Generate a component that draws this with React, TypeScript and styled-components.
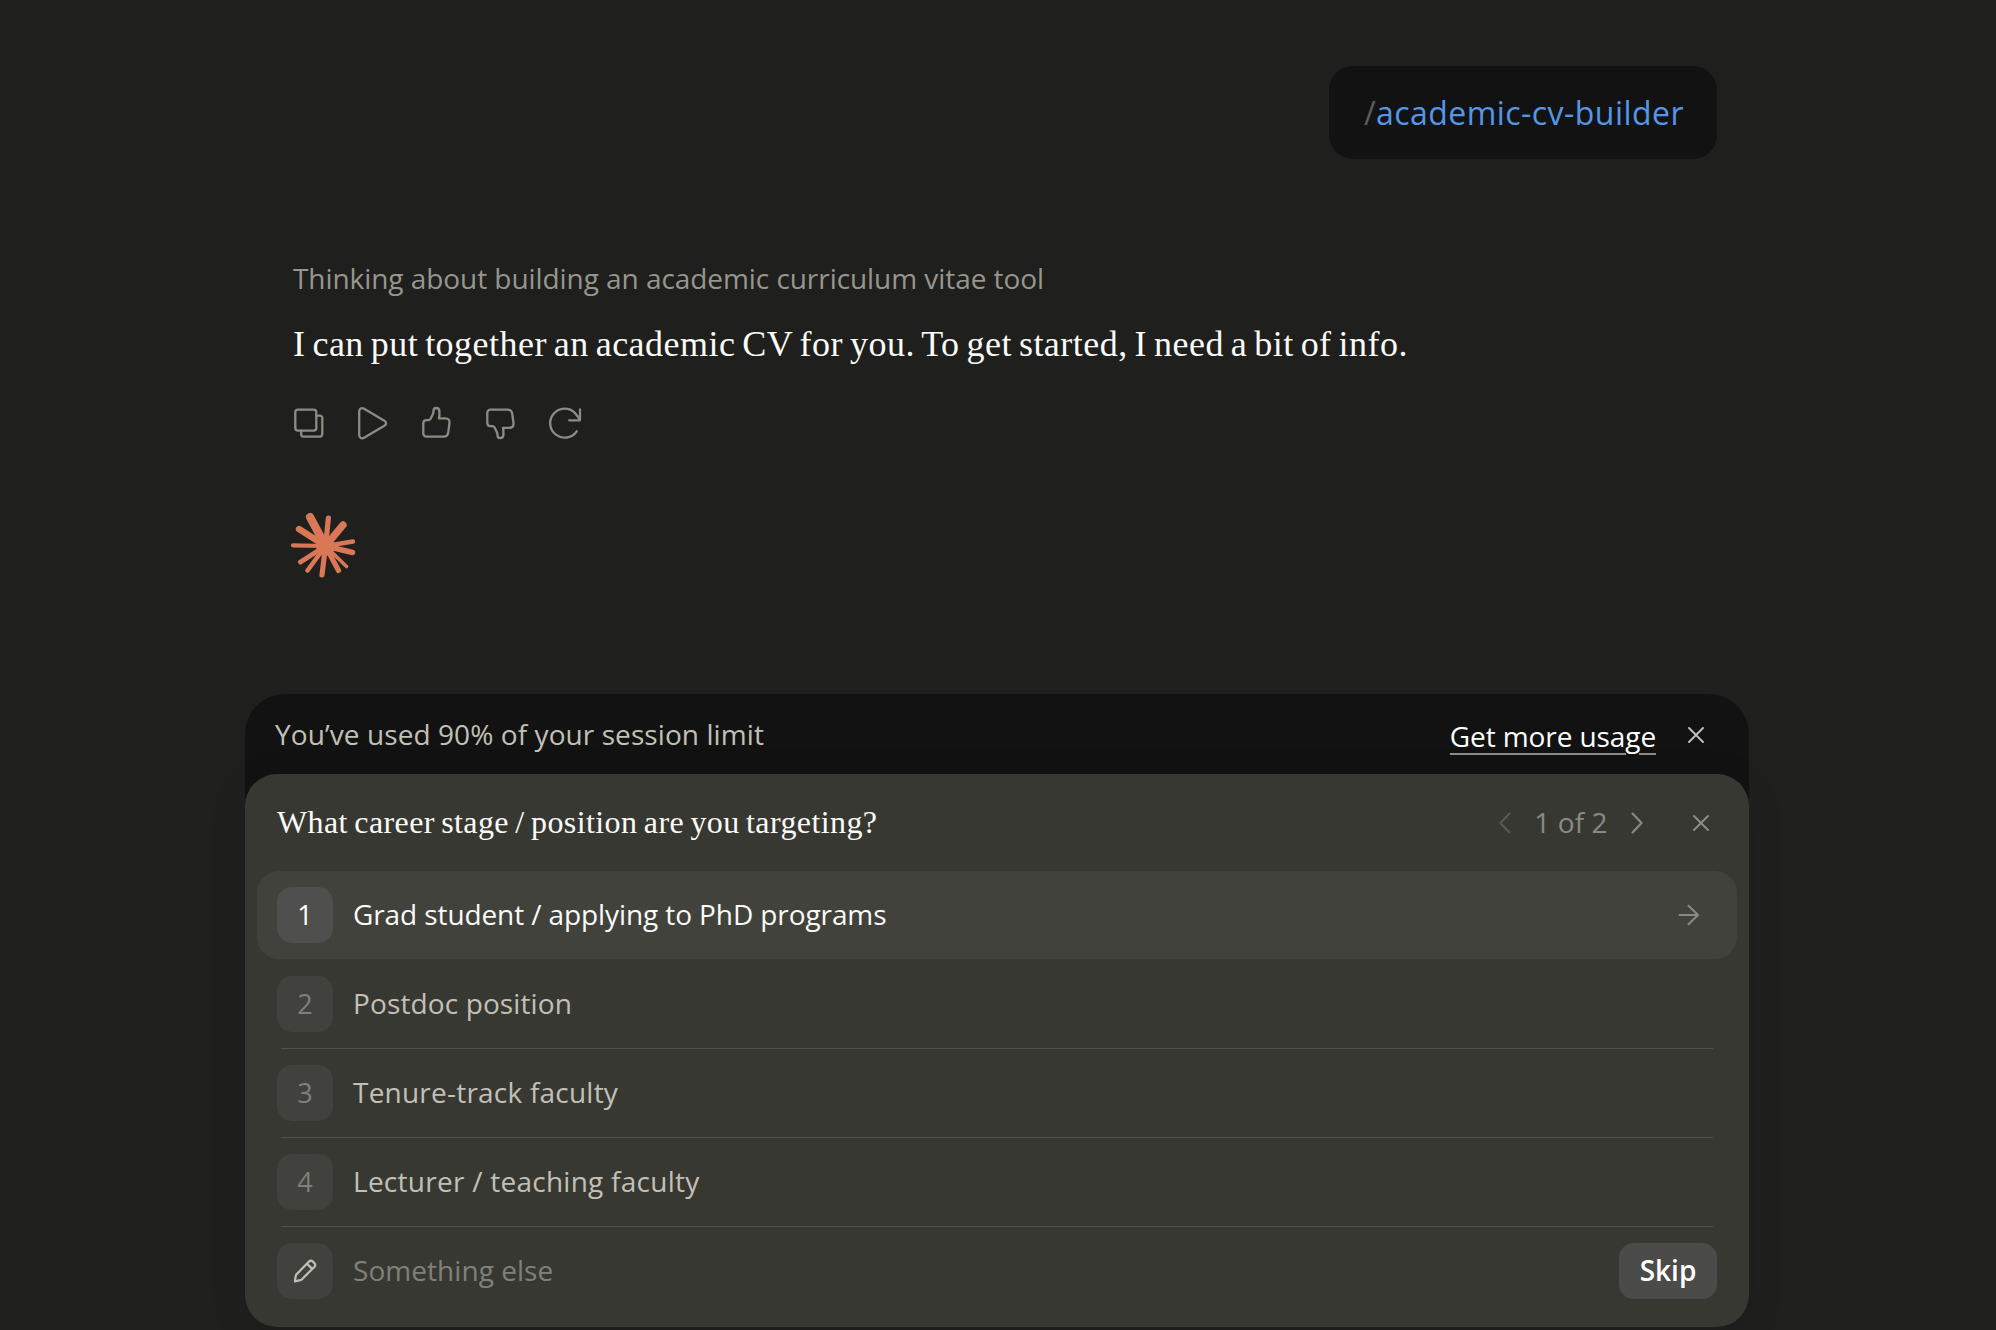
import React from "react";
import styled, { createGlobalStyle } from "styled-components";

const sans = `"Open Sans", "Noto Sans", sans-serif`;
const serif = `"Liberation Serif", serif`;

const Global = createGlobalStyle`
  *, *::before, *::after { box-sizing: border-box; }
  body { margin: 0; background: #1f1f1d; }
  button { font: inherit; color: inherit; background: none; border: 0; padding: 0; }
`;

const Page = styled.main`
  width: 1996px;
  height: 1330px;
  padding: 66px 247px 0 245px;
  display: flex;
  flex-direction: column;
  overflow: hidden;
  background: #1f1f1d;
  font-family: ${sans};
  color: #fff;
`;

const Conversation = styled.section`
  height: 628px;
  padding: 0 32px 0 48px;
  display: flex;
  flex-direction: column;
`;

const UserBubble = styled.div`
  align-self: flex-end;
  width: 388px;
  height: 93px;
  padding-left: 35px;
  border-radius: 24px;
  background: #121212;
  display: flex;
  align-items: center;
  line-height: 44px;
`;

const Text = styled.span<{ $size: number; $color: string; $spacing?: number; $word?: number; $serif?: boolean; $weight?: number }>`
  font-family: ${(p) => (p.$serif ? serif : sans)};
  font-size: ${(p) => p.$size}px;
  font-weight: ${(p) => p.$weight ?? 430};
  letter-spacing: ${(p) => p.$spacing ?? 0}px;
  word-spacing: ${(p) => p.$word ?? 0}px;
  color: ${(p) => p.$color};
  white-space: nowrap;
`;

const RowLabel = styled(Text)`
  padding-bottom: 2px;
`;

const Slash = styled(Text)`
  width: 12px;
`;

const Thinking = styled.div`
  margin-top: 98px;
  height: 43px;
  line-height: 42px;
`;

const Answer = styled.p`
  margin: 20px 0 0;
  height: 48px;
  line-height: 48px;
`;

const Actions = styled.div`
  margin-top: 35px;
  height: 40px;
  display: flex;
  gap: 24px;
  margin-left: -4px;
`;

const IconButton = styled.button<{ $color: string; $w?: number }>`
  width: ${(p) => p.$w ?? 40}px;
  height: 40px;
  display: flex;
  align-items: center;
  justify-content: center;
  color: ${(p) => p.$color};
`;

const Mark = styled.div`
  margin: 69px 0 0 -3px;
  height: 68px;
`;

const Dock = styled.section`
  width: 1504px;
  flex: none;
  background: #121212;
  border-radius: 40px 40px 32px 32px;
`;

const Banner = styled.div`
  height: 80px;
  padding: 2px 33px 0 30px;
  display: flex;
  align-items: center;
`;

const Spacer = styled.div`
  flex: 1;
`;

const UsageLink = styled.a`
  margin: 1px 20px 0 0;
  font-size: 28px;
  font-weight: 430;
  color: #fff;
  text-decoration: underline;
  text-decoration-color: #8b8b87;
  text-decoration-thickness: 2px;
  text-underline-offset: 6px;
  letter-spacing: -0.1px;
`;

const Card = styled.div`
  height: 553px;
  padding: 0 12px;
  border-radius: 32px;
  background: #383833;
  box-shadow: 0 8px 40px rgba(0, 0, 0, 0.09);
`;

const CardHeader = styled.header`
  height: 97px;
  padding: 0 16px 0 20px;
  display: flex;
  align-items: center;
`;

const Pager = styled.div`
  display: flex;
  align-items: center;
  margin-right: 32px;
`;

const PageCount = styled(RowLabel)`
  width: 76px;
  margin: 0 16px;
  text-align: center;
`;

const Options = styled.ul`
  margin: 0;
  padding: 0;
  list-style: none;
`;

const Option = styled.li<{ $active?: boolean }>`
  height: 88px;
  padding: 0 20px;
  border-radius: 22px;
  display: flex;
  align-items: center;
  background: ${(p) => (p.$active ? "#42423d" : "transparent")};
`;

const Divider = styled.li<{ $hidden?: boolean }>`
  height: 1px;
  margin: 0 24px;
  background: ${(p) => (p.$hidden ? "transparent" : "#50504c")};
`;

const Badge = styled.span<{ $active?: boolean }>`
  width: 56px;
  height: 56px;
  margin-right: 20px;
  flex: none;
  border-radius: 15px;
  display: flex;
  align-items: center;
  justify-content: center;
  background: ${(p) => (p.$active ? "#4f4f4d" : "#41413d")};
`;

const Skip = styled.button`
  width: 98px;
  height: 56px;
  border-radius: 15px;
  background: #4b4b49;
  display: flex;
  align-items: center;
  justify-content: center;
`;

type IconProps = { w: number; h: number; sw?: number; children: React.ReactNode };
const Icon = ({ w, h, sw = 2.3, children }: IconProps) => (
  <svg width={w} height={h} viewBox={`0 0 ${w} ${h}`} fill="none" stroke="currentColor" strokeWidth={sw} strokeLinecap="round" strokeLinejoin="round">
    {children}
  </svg>
);

const CopyIcon = () => (
  <Icon w={40} h={40}>
    <rect x="6.3" y="6.6" width="21" height="21" rx="2.6" />
    <path d="M27.3 12.6h3.6a2.4 2.4 0 0 1 2.4 2.4v16.2a2.4 2.4 0 0 1-2.4 2.4H14.6a2.4 2.4 0 0 1-2.4-2.4v-3.6" />
  </Icon>
);
const PlayIcon = () => (
  <Icon w={40} h={40}>
    <path d="M6.2 8.4c0-2.9 2.5-4.1 4.9-2.7l20.3 12.1c2.3 1.4 2.3 3.5 0 4.9L11.1 34.700c-2.4 1.4-4.9.2-4.9-2.7z" />
  </Icon>
);
const thumb = "M6.3 20.2a3.2 3.2 0 0 1 3.2-3.1h1.9c1 0 1.7-.5 2.2-1.4l2.2-4.500c.5-1.100.7-2.200.7-3.300 0-1.700 1-2.900 2.600-2.900 2 0 3.300 1.500 3.300 3.600v4.200c0 1.100-.5 1.900-.5 2.600h6.400c3 0 4.500 1.700 4.200 4.400l-1.200 9.300c-.4 3-2 4.500-4.800 4.500H9.500a3.200 3.200 0 0 1-3.200-3.200z";
const UpIcon = () => (
  <Icon w={40} h={40}><path d={thumb} /></Icon>
);
const DownIcon = () => (
  <Icon w={40} h={40}><path d={thumb} transform="matrix(1 0 0 -1 0 40.2)" /></Icon>
);
const RetryIcon = () => (
  <Icon w={40} h={40}>
    <path d="M31.7 28.3A14.5 14.5 0 1 1 29.8 9.8L35 16.500M35 6.300v11H24.200" />
  </Icon>
);
const Cross = () => (
  <Icon w={16} h={16} sw={1.9}><path d="M1 1l14 14M15 1L1 15" /></Icon>
);
const Chevron = ({ left }: { left?: boolean }) => (
  <Icon w={12} h={22} sw={2.1}><path d={left ? "M10.5 1.5L1.5 11l9 9.5" : "M1.5 1.5L10.5 11l-9 9.5"} /></Icon>
);
const Arrow = () => (
  <Icon w={22} h={22} sw={2.1}><path d="M1.5 11h18.500M10.500 1.800l9.500 9.200-9.500 9.200" /></Icon>
);
const Pencil = () => (
  <Icon w={24} h={24} sw={2.2}>
    <path d="M15 3.6l1.200-1.200c1.100-1.100 2.300-1.100 3.400 0l1.900 1.900c1.100 1.100 1.100 2.300 0 3.400L9 20.200c-.5.5-1.100.8-1.800 1L1.900 22.300l.9-5.500c.1-.7.4-1.200.9-1.700zM14 4.700l5.200 5.200" />
  </Icon>
);

const rays = [
  [30, 16, 8.2], [48.4, 17, 5.2], [63, 24, 7.4], [73, 40.5, 4.4], [72.5, 51.5, 5.4],
  [66.5, 65.5, 3.6], [58.5, 69.5, 5.2], [42, 74, 5.2], [27.5, 69.5, 4.6],
  [20.5, 61, 5], [13, 44.4, 4.2], [19, 28, 6.4],
];
const Starburst = () => (
  <svg width="68" height="68" viewBox="10 11 68 68" fill="#d97757">
    {rays.map(([x, y, w], i) => (
      <line key={i} x1="45.5" y1="45" x2={x} y2={y} stroke="#d97757" strokeWidth={w} strokeLinecap="round" />
    ))}
    <circle cx="45.5" cy="45.5" r="9.5" />
  </svg>
);

const choices = [
  { label: "Grad student / applying to PhD programs", spacing: -0.1 },
  { label: "Postdoc position", spacing: 0.12 },
  { label: "Tenure-track faculty", spacing: 0.22 },
  { label: "Lecturer / teaching faculty", spacing: 0.26 },
];

export default function App() {
  return (
    <>
      <Global />
      <Page>
        <Conversation>
          <UserBubble>
            <Slash $size={32} $color="#5c5c59">/</Slash>
            <Text $size={32} $color="#5596e6" $spacing={0.45}>academic-cv-builder</Text>
          </UserBubble>
          <Thinking><Text $size={28} $color="#97968d" $spacing={-0.06}>Thinking about building an academic curriculum vitae tool</Text></Thinking>
          <Answer><Text $serif $size={36} $color="#fafaf7" $spacing={0.47} $word={-2.5}>I can put together an academic CV for you. To get started, I need a bit of info.</Text></Answer>
          <Actions>
            {[CopyIcon, PlayIcon, UpIcon, DownIcon, RetryIcon].map((Glyph, i) => (
              <IconButton key={i} $color="#8d8c84"><Glyph /></IconButton>
            ))}
          </Actions>
          <Mark><Starburst /></Mark>
        </Conversation>
        <Dock>
          <Banner>
            <RowLabel $size={28} $color="#c2c0b6" $spacing={0.08}>You’ve used 90% of your session limit</RowLabel>
            <Spacer />
            <UsageLink>Get more usage</UsageLink>
            <IconButton $color="#c2c0b6"><Cross /></IconButton>
          </Banner>
          <Card>
            <CardHeader>
              <Text $serif $size={32} $color="#fafaf7" $spacing={0.4} $word={-2}>What career stage / position are you targeting?</Text>
              <Spacer />
              <Pager>
                <IconButton $w={24} $color="#575753"><Chevron left /></IconButton>
                <PageCount $size={28} $color="#8a8a83" $spacing={0.1}>1 of 2</PageCount>
                <IconButton $w={24} $color="#8a8a83"><Chevron /></IconButton>
              </Pager>
              <IconButton $color="#8f8e86"><Cross /></IconButton>
            </CardHeader>
            <Options>
              {choices.map((c, i) => (
                <React.Fragment key={c.label}>
                  <Option $active={i === 0}>
                    <Badge $active={i === 0}>
                      <RowLabel $size={27} $color={i === 0 ? "#fff" : "#80807a"}>{i + 1}</RowLabel>
                    </Badge>
                    <RowLabel $size={28} $color={i === 0 ? "#fafaf7" : "#c2c0b6"} $spacing={c.spacing}>{c.label}</RowLabel>
                    {i === 0 && (<><Spacer /><IconButton $color="#8a8a83" $w={56}><Arrow /></IconButton></>)}
                  </Option>
                  <Divider $hidden={i === 0} />
                </React.Fragment>
              ))}
              <Option>
                <Badge><IconButton $color="#c2c0b6"><Pencil /></IconButton></Badge>
                <RowLabel $size={28} $color="#80807a" $spacing={0.05}>Something else</RowLabel>
                <Spacer />
                <Skip><RowLabel $size={28} $weight={560} $color="#fff">Skip</RowLabel></Skip>
              </Option>
            </Options>
          </Card>
        </Dock>
      </Page>
    </>
  );
}
